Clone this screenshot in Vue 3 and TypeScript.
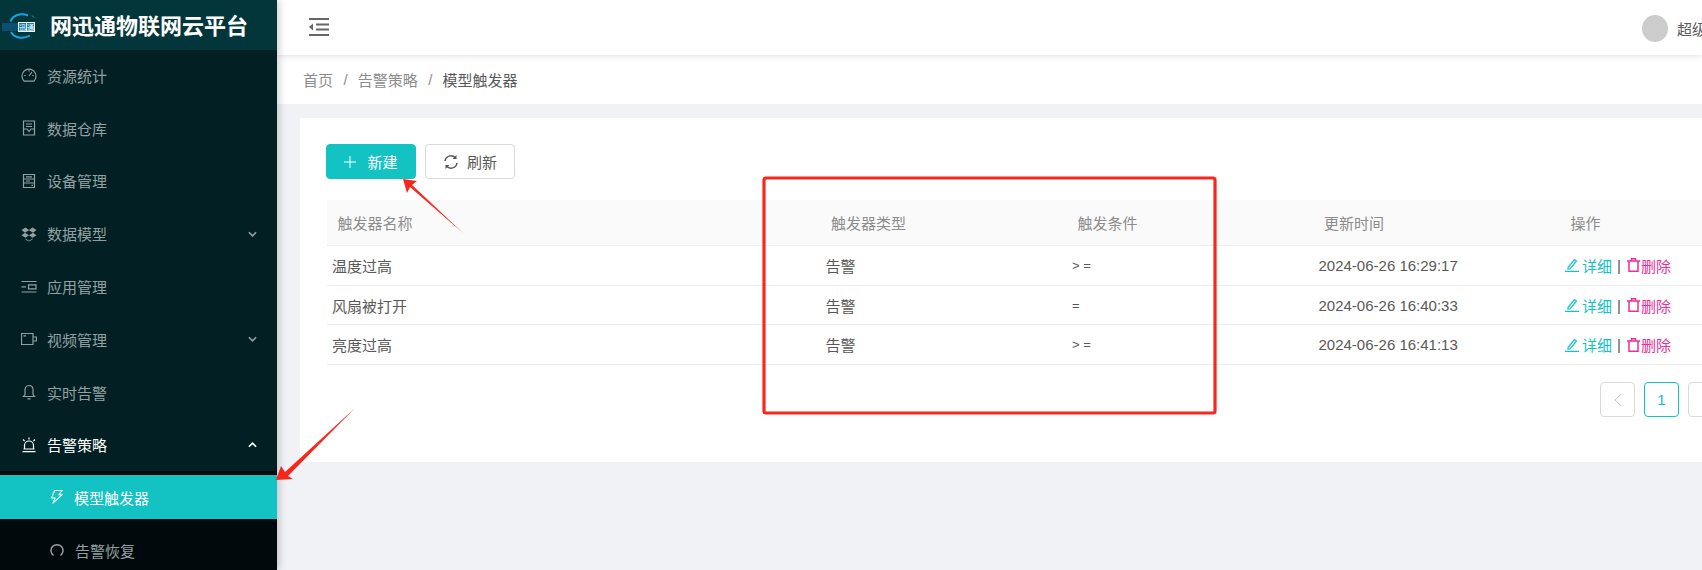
<script setup lang="ts">
interface MenuItem { label: string; icon: string; arrow?: 'down' | 'up'; active?: boolean }
const menu: MenuItem[] = [
  { label: '资源统计', icon: 'gauge' },
  { label: '数据仓库', icon: 'store' },
  { label: '设备管理', icon: 'server' },
  { label: '数据模型', icon: 'dropbox', arrow: 'down' },
  { label: '应用管理', icon: 'list' },
  { label: '视频管理', icon: 'video', arrow: 'down' },
  { label: '实时告警', icon: 'bell' },
  { label: '告警策略', icon: 'alarm', arrow: 'up', active: true }
]
const rows = [
  { name: '温度过高', type: '告警', cond: '> =', time: '2024-06-26 16:29:17' },
  { name: '风扇被打开', type: '告警', cond: '=', time: '2024-06-26 16:40:33' },
  { name: '亮度过高', type: '告警', cond: '> =', time: '2024-06-26 16:41:13' }
]
</script>

<template>
  <div class="page">
    <aside class="side">
      <div class="brand">
        <svg class="logo" viewBox="0 0 36 27" width="36" height="27">
          <path d="M27 2.500C20 -0.500 11.500 2 9.500 8.500" fill="none" stroke="#12a5e6" stroke-width="2" />
          <path d="M10 19c3 6 12 7.500 19 3.500" fill="none" stroke="#12a5e6" stroke-width="1.800" />
          <path d="M31 2.500l2 2" fill="none" stroke="#12a5e6" stroke-width="1" />
          <rect x="1" y="10" width="16" height="8" fill="#0a4f70" />
          <rect x="17" y="9" width="17" height="10" fill="#fff" />
          <rect x="18" y="10" width="7" height="8" fill="#0f7fc0" />
          <rect x="26" y="10" width="7" height="8" fill="#0f7fc0" />
          <text x="18" y="17" class="logo-text">迅</text>
          <text x="26" y="17" class="logo-text">通</text>
        </svg>
        <span class="brand-name">网迅通物联网云平台</span>
      </div>
      <nav class="nav">
        <div v-for="m in menu" :key="m.label" class="item" :class="{ on: m.active }">
          <svg class="ico" viewBox="0 0 16 16" width="16" height="16" fill="none" stroke="currentColor" stroke-width="1.200">
            <template v-if="m.icon === 'gauge'">
              <path d="M3.200 14.200A7 7 0 1 1 12.800 14.200z" />
              <path d="M8 9l3-4M3.300 8.500h1.400M11.300 8.500h1.400M8 3.200v1.300" />
            </template>
            <template v-else-if="m.icon === 'store'">
              <path d="M2.500 1h11v14h-11z" />
              <path d="M5 4h6M5 6.500h6M2.500 9h3.500l2 2.500 2-2.500h3.500" />
            </template>
            <template v-else-if="m.icon === 'server'">
              <path d="M2.500 1.500h11v13h-11zM2.500 6h11M2.500 10h11M5 3.800h6M5 8h4M10.500 12.300h1.500" />
            </template>
            <template v-else-if="m.icon === 'dropbox'">
              <path fill="currentColor" stroke="none" d="M4.500 1.500L0.500 4 4 6.800 0.500 9.300l4 2.500L8 9.300l3.500 2.500 4-2.500L12 6.800 15.500 4l-4-2.500L8 4zM4 6.800L8 4.200l4 2.600-4 2.500zM4.500 12.600v.8L8 15.500l3.500-2.100v-.8L8 14.800z" />
            </template>
            <template v-else-if="m.icon === 'list'">
              <path d="M0.500 2.500h15M0.500 7.800h4.500M7.500 5.800h7.500v4H7.500zM0.500 13h15" />
            </template>
            <template v-else-if="m.icon === 'video'">
              <path d="M0.500 2.500h11.500v11H0.500zM12 6h3.500v4H12zM2.500 4.800h2.500" />
            </template>
            <template v-else-if="m.icon === 'bell'">
              <path d="M8 1.500c3 0 4 2.500 4 4.500v4.500l1.500 2h-11l1.500-2V6c0-2 1-4.500 4-4.500zM6.500 14.800h3" />
            </template>
            <template v-else>
              <path d="M3.500 12V8.500a4.500 4.500 0 0 1 9 0V12M1.500 14.700h13M2.500 12h11M8 0.500v2M2 2.500l1.700 1.700M14 2.500l-1.700 1.700" />
            </template>
          </svg>
          <span class="label">{{ m.label }}</span>
          <svg v-if="m.arrow" class="chev" viewBox="0 0 10 6" width="9" height="6" fill="none" stroke="currentColor" stroke-width="1.800">
            <path :d="m.arrow === 'down' ? 'M1 1l4 4 4-4' : 'M1 5l4-4 4 4'" />
          </svg>
        </div>
        <div class="sub">
          <div class="sub-item active">
            <svg viewBox="0 0 14 16" width="13" height="16" fill="none" stroke="currentColor" stroke-width="1.100">
              <path d="M5 1h8L9.500 5.500H13L3 15l2.500-6H1.500z" />
            </svg>
            <span>模型触发器</span>
          </div>
          <div class="sub-item">
            <svg viewBox="0 0 14 14" width="14" height="14" fill="none" stroke="currentColor" stroke-width="1.500">
              <path d="M3.500 12.500A6 6 0 1 1 10.500 12.500" />
            </svg>
            <span>告警恢复</span>
          </div>
        </div>
      </nav>
    </aside>

    <main class="main">
      <header class="top">
        <svg class="fold" viewBox="0 0 20 18" width="20" height="18" fill="#666">
          <rect x="0" y="0" width="20" height="2" />
          <rect x="7" y="5.500" width="13" height="2" />
          <rect x="7" y="10.500" width="13" height="2" />
          <rect x="0" y="16" width="20" height="2" />
          <path d="M4 5.500v7L0 9z" />
        </svg>
        <div class="user">
          <span class="avatar"></span>
          <span class="uname">超级管理员</span>
        </div>
      </header>
      <div class="crumb">
        <span class="c-link">首页</span><i>/</i>
        <span class="c-link">告警策略</span><i>/</i>
        <span class="c-cur">模型触发器</span>
      </div>
      <section class="content">
        <div class="card">
          <div class="tools">
            <button class="btn primary">
              <svg viewBox="0 0 12 12" width="12" height="12" stroke="currentColor" stroke-width="1"><path d="M6 0v12M0 6h12" /></svg>
              <span>新建</span>
            </button>
            <button class="btn">
              <svg viewBox="0 0 16 16" width="16" height="16" fill="none" stroke="#555" stroke-width="1.500">
                <path d="M2 7a6 6 0 0 1 10.500-3M14 9a6 6 0 0 1-10.500 3" />
                <path fill="#555" stroke="none" d="M13.500 1v4h-4zM2.500 15v-4h4z" />
              </svg>
              <span>刷新</span>
            </button>
          </div>
          <div class="table">
            <div class="tr head">
              <div>触发器名称</div><div>触发器类型</div><div>触发条件</div><div>更新时间</div><div>操作</div>
            </div>
            <div v-for="r in rows" :key="r.name" class="tr body">
              <div>{{ r.name }}</div>
              <div>{{ r.type }}</div>
              <div class="cond">{{ r.cond }}</div>
              <div>{{ r.time }}</div>
              <div class="ops">
                <span class="edit">
                  <svg viewBox="0 0 14 14" width="14" height="14" fill="none" stroke="currentColor" stroke-width="1.200">
                    <path d="M3 9.500L9.500 1.500l2 1.500L5 11H3zM0 13.300h14" />
                  </svg>详细</span>
                <span class="sep">|</span>
                <span class="del">
                  <svg viewBox="0 0 13 14" width="13" height="14" fill="none" stroke="currentColor" stroke-width="1.500">
                    <path d="M0 3h13M4.500 3V0.800h4V3M2 3v10.300h9V3" />
                  </svg>删除</span>
              </div>
            </div>
          </div>
          <div class="pager">
            <span class="pg dis">
              <svg viewBox="0 0 8 12" width="8" height="12" fill="none" stroke="currentColor" stroke-width="1"><path d="M7 0.500L1 6l6 5.500" /></svg>
            </span>
            <span class="pg cur">1</span>
            <span class="pg"></span>
          </div>
        </div>
      </section>
    </main>

    <svg class="marks" viewBox="0 0 1702 570" width="1702" height="570">
      <rect x="764" y="178" width="451" height="235" rx="2" fill="none" stroke="#f9261c" stroke-width="3.200" />
      <path fill="#f9261c" d="M403 179l14 2-5 4 51 48-53-46-3 6z" />
      <path fill="#f9261c" d="M276 480l5-14 4 6 70-64-67 68 5 3z" />
    </svg>
  </div>
</template>

<style>
html, body { margin: 0; overflow: hidden; background: #f0f2f5; }
</style>

<style scoped>
.page {
  position: relative;
  display: flex;
  width: 1702px;
  height: 570px;
  overflow: hidden;
  font-family: "Liberation Sans", "Noto Sans CJK SC", sans-serif;
  font-size: 15px;
  color: #595959;
}
.side {
  position: relative;
  z-index: 2;
  flex: none;
  width: 277px;
  background: #022024;
  box-shadow: 2px 0 8px rgba(0, 0, 0, .2);
}
.brand {
  display: flex;
  align-items: center;
  height: 50px;
  padding-left: 1px;
  gap: 13px;
  background: #03363a;
}
.logo { flex: none; margin-top: 3px; }
.logo-text { font-size: 7px; fill: #fff; }
.brand-name {
  color: #fff;
  font-size: 22px;
  line-height: 1;
  font-weight: 700;
  white-space: nowrap;
  margin-top: 3px;
}
.nav { display: flex; flex-direction: column; margin-top: -1px; }
.item {
  display: flex;
  align-items: center;
  height: 52.800px;
  padding-left: 21px;
  color: #93a0a1;
}
.item .ico { flex: none; }
.item .label { margin-left: 10px; }
.item.on { color: #fff; }
.chev { margin-left: auto; margin-right: 20px; }
.sub { background: #000a0c; padding-top: 4px; }
.sub-item {
  display: flex;
  align-items: center;
  gap: 11px;
  height: 44px;
  padding-left: 50px;
  margin-bottom: 9px;
  color: #93a0a1;
}
.sub-item.active { background: #13c2c2; color: #fff; }
.main { flex: none; width: 1425px; display: flex; flex-direction: column; }
.top {
  position: relative;
  z-index: 1;
  display: flex;
  align-items: center;
  justify-content: space-between;
  height: 55px;
  padding-left: 32px;
  background: #fff;
  box-shadow: 0 1px 6px rgba(0, 0, 0, .12);
  white-space: nowrap;
}
.fold { flex: none; margin-top: -1px; }
.user { display: flex; align-items: center; gap: 9px; margin-right: -190px; width: 250px; flex: none; margin-top: 1px; }
.avatar { width: 26px; height: 27px; border-radius: 50%; background: #ccc; flex: none; }
.crumb {
  display: flex;
  align-items: center;
  height: 49px;
  padding-left: 26px;
  background: #fff;
  color: #8c8c8c;
  white-space: nowrap;
}
.crumb i { font-style: normal; margin: 0 10px 0 10.500px; color: #8c8c8c; }
.c-cur { color: #595959; }
.content { flex: 1; padding: 14px 0 0 23px; background: #f0f2f5; }
.card {
  box-sizing: border-box;
  height: 344px;
  padding: 26px 0 0 26px;
  background: #fff;
  width: 1450px;
}
.tools { display: flex; gap: 9px; }
.btn {
  display: flex;
  align-items: center;
  justify-content: center;
  gap: 8px;
  box-sizing: border-box;
  width: 90px;
  height: 35px;
  border: 1px solid #d9d9d9;
  border-radius: 4px;
  background: #fff;
  color: #595959;
  font: inherit;
  padding: 0;
}
.btn.primary { background: #13c2c2; border-color: #13c2c2; color: #fff; gap: 11px; }
.table { margin-top: 21px; margin-left: 1px; }
.tr {
  display: grid;
  grid-template-columns: 493.500px 246.500px 246.500px 246.500px 300px;
  align-items: center;
  border-bottom: 1px solid #eee;
  white-space: nowrap;
}
.head { height: 45px; background: #fafafa; color: #8c8c8c; padding-left: 10.500px; }
.body { height: 38.700px; padding-left: 5px; }
.cond { font-size: 13px; }
.ops { display: flex; align-items: center; gap: 5px; }
.edit, .del { display: inline-flex; align-items: center; gap: 3px; }
.del { gap: 1px; margin-left: 1px; }
.edit { color: #13c2c2; }
.del { color: #eb2f96; }
.sep { color: #595959; }
.pager { display: flex; gap: 9px; margin-top: 17px; margin-left: 1274px; }
.pg {
  display: flex;
  align-items: center;
  justify-content: center;
  flex: none;
  box-sizing: border-box;
  width: 35px;
  height: 35px;
  border: 1px solid #d9d9d9;
  border-radius: 4px;
}
.pg.dis { color: #bfbfbf; }
.pg.cur { border-color: #13c2c2; color: #13c2c2; }
.marks { position: absolute; left: 0; top: 0; z-index: 5; pointer-events: none; }
</style>
